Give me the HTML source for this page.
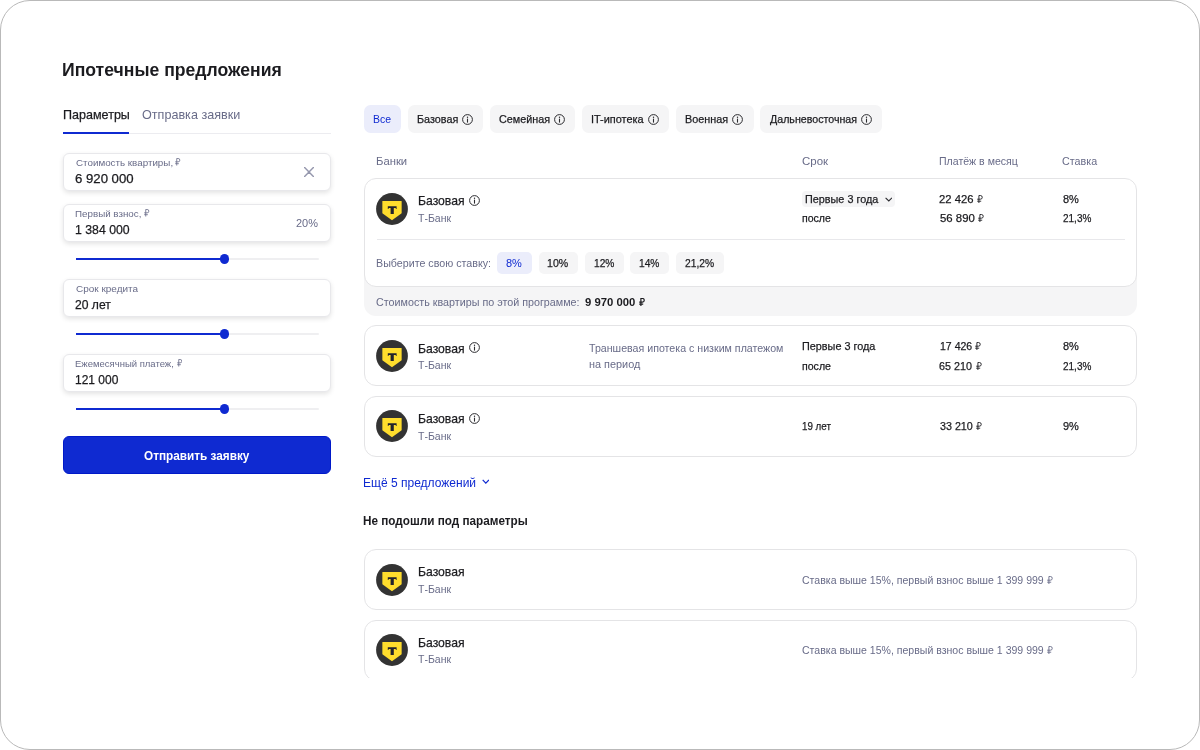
<!DOCTYPE html>
<html lang="ru"><head><meta charset="utf-8"><title>Ипотечные предложения</title>
<style>
html,body{margin:0;padding:0;background:#fff}
body{width:1200px;height:750px;overflow:hidden;position:relative;font-family:"Liberation Sans",sans-serif}
.frame{position:absolute;left:0;top:0;width:1200px;height:750px;box-sizing:border-box;border:1px solid #b9b9b9;border-radius:30px;background:#fff}
.clip{position:absolute;left:0;top:0;width:1200px;height:678px;overflow:hidden;will-change:transform}
.a{position:absolute;display:block}
.t{position:absolute;white-space:pre;line-height:1;font-weight:400;transform-origin:0 0}
.k{-webkit-text-stroke:0.25px #1b1b1f}
</style></head><body>
<div class="frame"></div>
<div class="clip">
<div class="t" style="left:62.36px;top:61px;font-size:18px;color:#1b1b1f;font-weight:700;transform:scaleX(0.9784);">Ипотечные предложения</div>
<div class="t k" style="left:62.50px;top:108px;font-size:13px;color:#1b1b1f;transform:scaleX(0.9653);">Параметры</div>
<div class="t" style="left:141.93px;top:108px;font-size:13px;color:#686b88;transform:scaleX(0.9689);">Отправка заявки</div>
<div class="a" style="left:63.00px;top:133.00px;width:268.00px;height:1.00px;background:#ececf0"></div>
<div class="a" style="left:63.00px;top:132.00px;width:66.00px;height:2.00px;background:#0f2ad1"></div>
<div class="a" style="left:63.00px;top:153.00px;width:268.00px;height:38.00px;box-sizing:border-box;border:1px solid #e8e8eb;border-radius:6px;background:#fff;box-shadow:0 2px 5px rgba(0,0,0,.11)"></div>
<svg class="a" style="left:175.39px;top:158.46px" width="5.34" height="7.54" viewBox="0 0 5.8 8.2"><path d="M1.9 8.2 V0.5 H3.4 A1.85 1.85 0 0 1 3.4 4.2 H0.2 M0.2 6.2 H4.2" fill="none" stroke="#686b88" stroke-width="0.90"/></svg>
<div class="t" style="left:75.51px;top:158px;font-size:9.5px;color:#686b88;transform:scaleX(1.0323);">Стоимость квартиры,</div>
<div class="t k" style="left:75.34px;top:173px;font-size:12.5px;color:#1b1b1f;transform:scaleX(1.0538);">6 920 000</div>
<svg class="a" style="left:304px;top:167px" width="10" height="10" viewBox="0 0 10 10"><path d="M0.6 0.6 L9.4 9.4 M9.4 0.6 L0.6 9.4" stroke="#9597ad" stroke-width="1.45" stroke-linecap="round" fill="none"/></svg>
<div class="a" style="left:63.00px;top:204.00px;width:268.00px;height:38.00px;box-sizing:border-box;border:1px solid #e8e8eb;border-radius:6px;background:#fff;box-shadow:0 2px 5px rgba(0,0,0,.11)"></div>
<svg class="a" style="left:144.39px;top:209.46px" width="5.34" height="7.54" viewBox="0 0 5.8 8.2"><path d="M1.9 8.2 V0.5 H3.4 A1.85 1.85 0 0 1 3.4 4.2 H0.2 M0.2 6.2 H4.2" fill="none" stroke="#686b88" stroke-width="0.90"/></svg>
<div class="t" style="left:75.22px;top:209px;font-size:9.5px;color:#686b88;transform:scaleX(1.0305);">Первый взнос,</div>
<div class="t k" style="left:75.08px;top:224px;font-size:12.5px;color:#1b1b1f;transform:scaleX(0.9825);">1 384 000</div>
<div class="t" style="left:296.45px;top:218px;font-size:11.5px;color:#686b88;transform:scaleX(0.9536);">20%</div>
<div class="a" style="left:76.00px;top:258.00px;width:243.00px;height:2.00px;background:#efeff1;border-radius:1px"></div>
<div class="a" style="left:76.00px;top:258.00px;width:148.00px;height:2.00px;background:#0f2ad1"></div>
<div class="a" style="left:219.50px;top:254.10px;width:9.80px;height:9.80px;border-radius:50%;background:#0f2ad1"></div>
<div class="a" style="left:63.00px;top:279.00px;width:268.00px;height:38.00px;box-sizing:border-box;border:1px solid #e8e8eb;border-radius:6px;background:#fff;box-shadow:0 2px 5px rgba(0,0,0,.11)"></div>
<div class="t" style="left:75.50px;top:284px;font-size:9.5px;color:#686b88;transform:scaleX(1.0492);">Срок кредита</div>
<div class="t k" style="left:75.39px;top:299px;font-size:12.5px;color:#1b1b1f;transform:scaleX(0.9705);">20 лет</div>
<div class="a" style="left:76.00px;top:333.00px;width:243.00px;height:2.00px;background:#efeff1;border-radius:1px"></div>
<div class="a" style="left:76.00px;top:333.00px;width:148.00px;height:2.00px;background:#0f2ad1"></div>
<div class="a" style="left:219.50px;top:329.10px;width:9.80px;height:9.80px;border-radius:50%;background:#0f2ad1"></div>
<div class="a" style="left:63.00px;top:354.00px;width:268.00px;height:38.00px;box-sizing:border-box;border:1px solid #e8e8eb;border-radius:6px;background:#fff;box-shadow:0 2px 5px rgba(0,0,0,.11)"></div>
<svg class="a" style="left:176.89px;top:359.46px" width="5.34" height="7.54" viewBox="0 0 5.8 8.2"><path d="M1.9 8.2 V0.5 H3.4 A1.85 1.85 0 0 1 3.4 4.2 H0.2 M0.2 6.2 H4.2" fill="none" stroke="#686b88" stroke-width="0.90"/></svg>
<div class="t" style="left:75.24px;top:359px;font-size:9.5px;color:#686b88;transform:scaleX(1.0003);">Ежемесячный платеж,</div>
<div class="t k" style="left:75.10px;top:374px;font-size:12.5px;color:#1b1b1f;transform:scaleX(0.9586);">121 000</div>
<div class="a" style="left:76.00px;top:408.00px;width:243.00px;height:2.00px;background:#efeff1;border-radius:1px"></div>
<div class="a" style="left:76.00px;top:408.00px;width:148.00px;height:2.00px;background:#0f2ad1"></div>
<div class="a" style="left:219.50px;top:404.10px;width:9.80px;height:9.80px;border-radius:50%;background:#0f2ad1"></div>
<div class="a" style="left:63.00px;top:436.00px;width:268.00px;height:38.00px;box-sizing:border-box;border:1px solid #0019c8;border-radius:6px;background:#0f2ad1"></div>
<div class="t" style="left:144.33px;top:449px;font-size:13px;color:#fff;font-weight:700;transform:scaleX(0.9058);">Отправить заявку</div>
<div class="a" style="left:364.00px;top:105.00px;width:37.00px;height:28.00px;border-radius:6.5px;background:#ebedfb"></div>
<div class="t" style="left:372.86px;top:114px;font-size:11.5px;color:#0f2ad1;transform:scaleX(0.9105);">Все</div>
<div class="a" style="left:407.50px;top:105.00px;width:75.50px;height:28.00px;border-radius:6.5px;background:#f5f5f6"></div>
<div class="t k" style="left:416.94px;top:114px;font-size:11.5px;color:#1b1b1f;transform:scaleX(0.9394);">Базовая</div>
<svg class="a" style="left:462.00px;top:113.70px" width="11" height="11" viewBox="0 0 11 11"><circle cx="5.5" cy="5.5" r="4.9" fill="none" stroke="#2b2b2f" stroke-width="1"/><circle cx="5.5" cy="3.3" r="0.7" fill="#2b2b2f"/><path d="M5.5 5 V8.1" stroke="#2b2b2f" stroke-width="1.1" stroke-linecap="round"/></svg>
<div class="a" style="left:490.00px;top:105.00px;width:85.00px;height:28.00px;border-radius:6.5px;background:#f5f5f6"></div>
<div class="t k" style="left:498.96px;top:114px;font-size:11.5px;color:#1b1b1f;transform:scaleX(0.9383);">Семейная</div>
<svg class="a" style="left:553.90px;top:113.70px" width="11" height="11" viewBox="0 0 11 11"><circle cx="5.5" cy="5.5" r="4.9" fill="none" stroke="#2b2b2f" stroke-width="1"/><circle cx="5.5" cy="3.3" r="0.7" fill="#2b2b2f"/><path d="M5.5 5 V8.1" stroke="#2b2b2f" stroke-width="1.1" stroke-linecap="round"/></svg>
<div class="a" style="left:582.00px;top:105.00px;width:87.00px;height:28.00px;border-radius:6.5px;background:#f5f5f6"></div>
<div class="t k" style="left:590.52px;top:114px;font-size:11.5px;color:#1b1b1f;transform:scaleX(0.9505);">IT-ипотека</div>
<svg class="a" style="left:648.10px;top:113.70px" width="11" height="11" viewBox="0 0 11 11"><circle cx="5.5" cy="5.5" r="4.9" fill="none" stroke="#2b2b2f" stroke-width="1"/><circle cx="5.5" cy="3.3" r="0.7" fill="#2b2b2f"/><path d="M5.5 5 V8.1" stroke="#2b2b2f" stroke-width="1.1" stroke-linecap="round"/></svg>
<div class="a" style="left:676.00px;top:105.00px;width:77.50px;height:28.00px;border-radius:6.5px;background:#f5f5f6"></div>
<div class="t k" style="left:684.93px;top:114px;font-size:11.5px;color:#1b1b1f;transform:scaleX(0.9410);">Военная</div>
<svg class="a" style="left:731.70px;top:113.70px" width="11" height="11" viewBox="0 0 11 11"><circle cx="5.5" cy="5.5" r="4.9" fill="none" stroke="#2b2b2f" stroke-width="1"/><circle cx="5.5" cy="3.3" r="0.7" fill="#2b2b2f"/><path d="M5.5 5 V8.1" stroke="#2b2b2f" stroke-width="1.1" stroke-linecap="round"/></svg>
<div class="a" style="left:760.00px;top:105.00px;width:122.00px;height:28.00px;border-radius:6.5px;background:#f5f5f6"></div>
<div class="t k" style="left:769.65px;top:114px;font-size:11.5px;color:#1b1b1f;transform:scaleX(0.9259);">Дальневосточная</div>
<svg class="a" style="left:860.90px;top:113.70px" width="11" height="11" viewBox="0 0 11 11"><circle cx="5.5" cy="5.5" r="4.9" fill="none" stroke="#2b2b2f" stroke-width="1"/><circle cx="5.5" cy="3.3" r="0.7" fill="#2b2b2f"/><path d="M5.5 5 V8.1" stroke="#2b2b2f" stroke-width="1.1" stroke-linecap="round"/></svg>
<div class="t" style="left:375.90px;top:156px;font-size:11.5px;color:#686b88;transform:scaleX(0.9795);">Банки</div>
<div class="t" style="left:801.73px;top:156px;font-size:11.5px;color:#686b88;transform:scaleX(0.9966);">Срок</div>
<div class="t" style="left:939.16px;top:156px;font-size:11.5px;color:#686b88;transform:scaleX(0.9180);">Платёж в месяц</div>
<div class="t" style="left:1062.46px;top:156px;font-size:11.5px;color:#686b88;transform:scaleX(0.9344);">Ставка</div>
<div class="a" style="left:364.00px;top:270.00px;width:773.00px;height:46.00px;border-radius:0 0 12px 12px;background:#f5f5f6"></div>
<div class="a" style="left:364.00px;top:178.00px;width:773.00px;height:109.00px;box-sizing:border-box;border:1px solid #e4e4e6;border-radius:12px;background:#fff;"></div>
<svg class="a" style="left:376.30px;top:192.60px" width="32" height="32" viewBox="0 0 32 32"><circle cx="16" cy="16" r="15.9" fill="#333"/><path d="M6.35 8.6 Q6.35 8 6.95 8 H25.05 Q25.65 8 25.65 8.6 V20.3 L16 27.3 L6.35 20.3 Z" fill="#ffdd2d"/><path d="M11.8 13.3 H20.6 V15.9 H19.8 V15.1 H17.8 V20.9 H14.6 V15.1 H12.6 V15.9 H11.8 Z" fill="#22222c"/></svg>
<div class="t k" style="left:417.82px;top:194px;font-size:13px;color:#1b1b1f;transform:scaleX(0.9377);">Базовая</div>
<svg class="a" style="left:469.00px;top:195.20px" width="11" height="11" viewBox="0 0 11 11"><circle cx="5.5" cy="5.5" r="4.9" fill="none" stroke="#2b2b2f" stroke-width="1"/><circle cx="5.5" cy="3.3" r="0.7" fill="#2b2b2f"/><path d="M5.5 5 V8.1" stroke="#2b2b2f" stroke-width="1.1" stroke-linecap="round"/></svg>
<div class="t" style="left:418.09px;top:213px;font-size:11.5px;color:#686b88;transform:scaleX(0.9140);">Т-Банк</div>
<div class="a" style="left:802.00px;top:191.00px;width:93.00px;height:16.00px;border-radius:4px;background:#f5f5f6"></div>
<div class="t k" style="left:805.13px;top:194px;font-size:11.5px;color:#1b1b1f;transform:scaleX(0.9418);">Первые 3 года</div>
<svg class="a" style="left:884.6px;top:196.5px" width="7.6" height="5" viewBox="0 0 7.6 5"><path d="M0.6 0.8 L3.8 4 L7 0.8" stroke="#2b2b2f" stroke-width="1.1" fill="none"/></svg>
<div class="t k" style="left:802.06px;top:213px;font-size:11.5px;color:#1b1b1f;transform:scaleX(0.9160);">после</div>
<svg class="a" style="left:977.45px;top:194.80px" width="5.80" height="8.20" viewBox="0 0 5.8 8.2"><path d="M1.9 8.2 V0.5 H3.4 A1.85 1.85 0 0 1 3.4 4.2 H0.2 M0.2 6.2 H4.2" fill="none" stroke="#1b1b1f" stroke-width="0.90"/></svg>
<div class="t k" style="left:939.44px;top:194px;font-size:11.5px;color:#1b1b1f;transform:scaleX(0.9808);">22 426</div>
<svg class="a" style="left:977.95px;top:213.80px" width="5.80" height="8.20" viewBox="0 0 5.8 8.2"><path d="M1.9 8.2 V0.5 H3.4 A1.85 1.85 0 0 1 3.4 4.2 H0.2 M0.2 6.2 H4.2" fill="none" stroke="#1b1b1f" stroke-width="0.90"/></svg>
<div class="t k" style="left:939.54px;top:213px;font-size:11.5px;color:#1b1b1f;transform:scaleX(0.9905);">56 890</div>
<div class="t k" style="left:1062.51px;top:194px;font-size:11.5px;color:#1b1b1f;transform:scaleX(0.9556);">8%</div>
<div class="t k" style="left:1063.00px;top:213px;font-size:11.5px;color:#1b1b1f;transform:scaleX(0.8696);">21,3%</div>
<div class="a" style="left:376.50px;top:239.00px;width:748.00px;height:1.00px;background:#e8e8eb"></div>
<div class="t" style="left:375.94px;top:258px;font-size:11.5px;color:#686b88;transform:scaleX(0.9295);">Выберите свою ставку:</div>
<div class="a" style="left:497.00px;top:252.00px;width:35.00px;height:22.00px;border-radius:5px;background:#ebedfb"></div>
<div class="t" style="left:506.31px;top:258px;font-size:11.5px;color:#0f2ad1;transform:scaleX(0.9556);">8%</div>
<div class="a" style="left:538.50px;top:252.00px;width:39.50px;height:22.00px;border-radius:5px;background:#f5f5f6"></div>
<div class="t k" style="left:547.21px;top:258px;font-size:11.5px;color:#1b1b1f;transform:scaleX(0.9202);">10%</div>
<div class="a" style="left:585.00px;top:252.00px;width:39.00px;height:22.00px;border-radius:5px;background:#f5f5f6"></div>
<div class="t k" style="left:593.73px;top:258px;font-size:11.5px;color:#1b1b1f;transform:scaleX(0.8880);">12%</div>
<div class="a" style="left:630.30px;top:252.00px;width:39.00px;height:22.00px;border-radius:5px;background:#f5f5f6"></div>
<div class="t k" style="left:639.23px;top:258px;font-size:11.5px;color:#1b1b1f;transform:scaleX(0.8880);">14%</div>
<div class="a" style="left:676.30px;top:252.00px;width:48.00px;height:22.00px;border-radius:5px;background:#f5f5f6"></div>
<div class="t k" style="left:685.49px;top:258px;font-size:11.5px;color:#1b1b1f;transform:scaleX(0.8949);">21,2%</div>
<div class="t" style="left:376.26px;top:297px;font-size:11.5px;color:#686b88;transform:scaleX(0.9343);">Стоимость квартиры по этой программе:</div>
<svg class="a" style="left:638.95px;top:297.80px" width="5.80" height="8.20" viewBox="0 0 5.8 8.2"><path d="M1.9 8.2 V0.5 H3.4 A1.85 1.85 0 0 1 3.4 4.2 H0.2 M0.2 6.2 H4.2" fill="none" stroke="#1b1b1f" stroke-width="1.20"/></svg>
<div class="t" style="left:585.10px;top:297px;font-size:11.5px;color:#1b1b1f;font-weight:700;transform:scaleX(0.9839);">9 970 000</div>
<div class="a" style="left:364.00px;top:325.00px;width:773.00px;height:61.00px;box-sizing:border-box;border:1px solid #e4e4e6;border-radius:12px;background:#fff;"></div>
<svg class="a" style="left:376.30px;top:339.70px" width="32" height="32" viewBox="0 0 32 32"><circle cx="16" cy="16" r="15.9" fill="#333"/><path d="M6.35 8.6 Q6.35 8 6.95 8 H25.05 Q25.65 8 25.65 8.6 V20.3 L16 27.3 L6.35 20.3 Z" fill="#ffdd2d"/><path d="M11.8 13.3 H20.6 V15.9 H19.8 V15.1 H17.8 V20.9 H14.6 V15.1 H12.6 V15.9 H11.8 Z" fill="#22222c"/></svg>
<div class="t k" style="left:417.82px;top:342px;font-size:13px;color:#1b1b1f;transform:scaleX(0.9377);">Базовая</div>
<svg class="a" style="left:469.00px;top:342.30px" width="11" height="11" viewBox="0 0 11 11"><circle cx="5.5" cy="5.5" r="4.9" fill="none" stroke="#2b2b2f" stroke-width="1"/><circle cx="5.5" cy="3.3" r="0.7" fill="#2b2b2f"/><path d="M5.5 5 V8.1" stroke="#2b2b2f" stroke-width="1.1" stroke-linecap="round"/></svg>
<div class="t" style="left:418.09px;top:360px;font-size:11.5px;color:#686b88;transform:scaleX(0.9140);">Т-Банк</div>
<div class="t" style="left:589.29px;top:343px;font-size:11.5px;color:#686b88;transform:scaleX(0.9250);">Траншевая ипотека с низким платежом</div>
<div class="t" style="left:589.04px;top:359px;font-size:11.5px;color:#686b88;transform:scaleX(0.9466);">на период</div>
<div class="t k" style="left:801.63px;top:341px;font-size:11.5px;color:#1b1b1f;transform:scaleX(0.9431);">Первые 3 года</div>
<div class="t k" style="left:802.06px;top:361px;font-size:11.5px;color:#1b1b1f;transform:scaleX(0.9193);">после</div>
<svg class="a" style="left:975.45px;top:341.80px" width="5.80" height="8.20" viewBox="0 0 5.8 8.2"><path d="M1.9 8.2 V0.5 H3.4 A1.85 1.85 0 0 1 3.4 4.2 H0.2 M0.2 6.2 H4.2" fill="none" stroke="#1b1b1f" stroke-width="0.90"/></svg>
<div class="t k" style="left:939.71px;top:341px;font-size:11.5px;color:#1b1b1f;transform:scaleX(0.9153);">17 426</div>
<svg class="a" style="left:975.95px;top:361.80px" width="5.80" height="8.20" viewBox="0 0 5.8 8.2"><path d="M1.9 8.2 V0.5 H3.4 A1.85 1.85 0 0 1 3.4 4.2 H0.2 M0.2 6.2 H4.2" fill="none" stroke="#1b1b1f" stroke-width="0.90"/></svg>
<div class="t k" style="left:939.46px;top:361px;font-size:11.5px;color:#1b1b1f;transform:scaleX(0.9353);">65 210</div>
<div class="t k" style="left:1062.51px;top:341px;font-size:11.5px;color:#1b1b1f;transform:scaleX(0.9556);">8%</div>
<div class="t k" style="left:1063.00px;top:361px;font-size:11.5px;color:#1b1b1f;transform:scaleX(0.8696);">21,3%</div>
<div class="a" style="left:364.00px;top:396.00px;width:773.00px;height:61.00px;box-sizing:border-box;border:1px solid #e4e4e6;border-radius:12px;background:#fff;"></div>
<svg class="a" style="left:376.30px;top:410.40px" width="32" height="32" viewBox="0 0 32 32"><circle cx="16" cy="16" r="15.9" fill="#333"/><path d="M6.35 8.6 Q6.35 8 6.95 8 H25.05 Q25.65 8 25.65 8.6 V20.3 L16 27.3 L6.35 20.3 Z" fill="#ffdd2d"/><path d="M11.8 13.3 H20.6 V15.9 H19.8 V15.1 H17.8 V20.9 H14.6 V15.1 H12.6 V15.9 H11.8 Z" fill="#22222c"/></svg>
<div class="t k" style="left:417.82px;top:412px;font-size:13px;color:#1b1b1f;transform:scaleX(0.9377);">Базовая</div>
<svg class="a" style="left:469.00px;top:413.00px" width="11" height="11" viewBox="0 0 11 11"><circle cx="5.5" cy="5.5" r="4.9" fill="none" stroke="#2b2b2f" stroke-width="1"/><circle cx="5.5" cy="3.3" r="0.7" fill="#2b2b2f"/><path d="M5.5 5 V8.1" stroke="#2b2b2f" stroke-width="1.1" stroke-linecap="round"/></svg>
<div class="t" style="left:418.09px;top:431px;font-size:11.5px;color:#686b88;transform:scaleX(0.9140);">Т-Банк</div>
<div class="t k" style="left:802.27px;top:421px;font-size:11.5px;color:#1b1b1f;transform:scaleX(0.8513);">19 лет</div>
<svg class="a" style="left:975.95px;top:421.80px" width="5.80" height="8.20" viewBox="0 0 5.8 8.2"><path d="M1.9 8.2 V0.5 H3.4 A1.85 1.85 0 0 1 3.4 4.2 H0.2 M0.2 6.2 H4.2" fill="none" stroke="#1b1b1f" stroke-width="0.90"/></svg>
<div class="t k" style="left:939.57px;top:421px;font-size:11.5px;color:#1b1b1f;transform:scaleX(0.9322);">33 210</div>
<div class="t k" style="left:1062.51px;top:421px;font-size:11.5px;color:#1b1b1f;transform:scaleX(0.9556);">9%</div>
<div class="t" style="left:363.24px;top:477px;font-size:12.5px;color:#0f2ad1;transform:scaleX(0.9616);">Ещё 5 предложений</div>
<svg class="a" style="left:481.9px;top:479.4px" width="7.6" height="6" viewBox="0 0 7.6 6"><path d="M0.7 0.9 L3.8 4.1 L6.9 0.9" stroke="#0f2ad1" stroke-width="1.2" fill="none"/></svg>
<div class="t" style="left:363.44px;top:515px;font-size:12px;color:#1b1b1f;font-weight:700;transform:scaleX(0.9771);">Не подошли под параметры</div>
<div class="a" style="left:364.00px;top:549.00px;width:773.00px;height:61.00px;box-sizing:border-box;border:1px solid #e4e4e6;border-radius:12px;background:#fff;"></div>
<svg class="a" style="left:376.30px;top:563.50px" width="32" height="32" viewBox="0 0 32 32"><circle cx="16" cy="16" r="15.9" fill="#333"/><path d="M6.35 8.6 Q6.35 8 6.95 8 H25.05 Q25.65 8 25.65 8.6 V20.3 L16 27.3 L6.35 20.3 Z" fill="#ffdd2d"/><path d="M11.8 13.3 H20.6 V15.9 H19.8 V15.1 H17.8 V20.9 H14.6 V15.1 H12.6 V15.9 H11.8 Z" fill="#22222c"/></svg>
<div class="t k" style="left:417.82px;top:565px;font-size:13px;color:#1b1b1f;transform:scaleX(0.9377);">Базовая</div>
<div class="t" style="left:418.09px;top:584px;font-size:11.5px;color:#686b88;transform:scaleX(0.9140);">Т-Банк</div>
<svg class="a" style="left:1047.25px;top:575.80px" width="5.80" height="8.20" viewBox="0 0 5.8 8.2"><path d="M1.9 8.2 V0.5 H3.4 A1.85 1.85 0 0 1 3.4 4.2 H0.2 M0.2 6.2 H4.2" fill="none" stroke="#686b88" stroke-width="0.90"/></svg>
<div class="t" style="left:802.07px;top:575px;font-size:11.5px;color:#686b88;transform:scaleX(0.9166);">Ставка выше 15%, первый взнос выше 1 399 999</div>
<div class="a" style="left:364.00px;top:619.50px;width:773.00px;height:61.00px;box-sizing:border-box;border:1px solid #e4e4e6;border-radius:12px;background:#fff;"></div>
<svg class="a" style="left:376.30px;top:633.70px" width="32" height="32" viewBox="0 0 32 32"><circle cx="16" cy="16" r="15.9" fill="#333"/><path d="M6.35 8.6 Q6.35 8 6.95 8 H25.05 Q25.65 8 25.65 8.6 V20.3 L16 27.3 L6.35 20.3 Z" fill="#ffdd2d"/><path d="M11.8 13.3 H20.6 V15.9 H19.8 V15.1 H17.8 V20.9 H14.6 V15.1 H12.6 V15.9 H11.8 Z" fill="#22222c"/></svg>
<div class="t k" style="left:417.82px;top:636px;font-size:13px;color:#1b1b1f;transform:scaleX(0.9377);">Базовая</div>
<div class="t" style="left:418.09px;top:654px;font-size:11.5px;color:#686b88;transform:scaleX(0.9140);">Т-Банк</div>
<svg class="a" style="left:1047.25px;top:645.80px" width="5.80" height="8.20" viewBox="0 0 5.8 8.2"><path d="M1.9 8.2 V0.5 H3.4 A1.85 1.85 0 0 1 3.4 4.2 H0.2 M0.2 6.2 H4.2" fill="none" stroke="#686b88" stroke-width="0.90"/></svg>
<div class="t" style="left:802.07px;top:645px;font-size:11.5px;color:#686b88;transform:scaleX(0.9166);">Ставка выше 15%, первый взнос выше 1 399 999</div>
</div>
</body></html>
